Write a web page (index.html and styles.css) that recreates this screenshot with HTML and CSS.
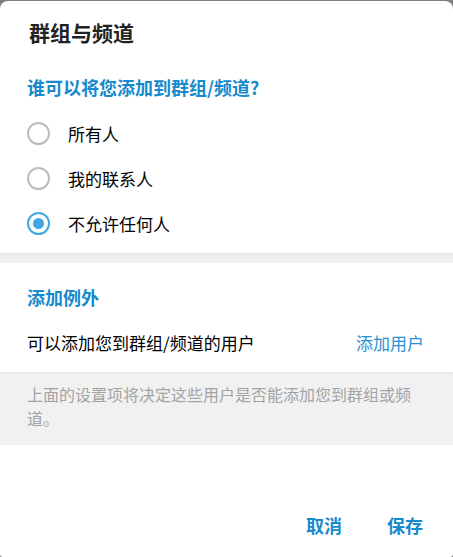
FILE: index.html
```html
<!DOCTYPE html>
<html lang="zh">
<head>
<meta charset="utf-8">
<link rel="stylesheet" href="styles.css">
</head>
<body>
<div class="dialog">
  <div class="title">群组与频道</div>
  <div class="section-head">谁可以将您添加到群组/频道?</div>
  <div class="options">
    <div class="option"><span class="radio"></span><span class="label">所有人</span></div>
    <div class="option"><span class="radio"></span><span class="label">我的联系人</span></div>
    <div class="option"><span class="radio checked"></span><span class="label">不允许任何人</span></div>
  </div>
  <div class="band"></div>
  <div class="section-head second">添加例外</div>
  <div class="row">
    <span class="row-text">可以添加您到群组/频道的用户</span>
    <span class="row-link">添加用户</span>
  </div>
  <div class="note">上面的设置项将决定这些用户是否能添加您到群组或频道。</div>
  <div class="spacer"></div>
  <div class="footer">
    <span class="btn">取消</span>
    <span class="btn">保存</span>
  </div>
</div>
</body>
</html>
```
FILE: styles.css
```css
html, body {
  margin: 0;
  padding: 0;
}
body {
  background: #7f7f7f;
  width: 453px;
  height: 557px;
  overflow: hidden;
  font-family: "Noto Sans CJK SC", "Noto Sans", sans-serif;
}
.dialog {
  margin-top: 1px;
  height: 556px;
  background: #fff;
  border-radius: 8px 8px 3px 3px;
  display: flex;
  flex-direction: column;
  overflow: hidden;
}
.title {
  height: 62px;
  display: flex;
  align-items: center;
  padding-left: 29px;
  font-size: 21px;
  font-weight: bold;
  color: #222;
}
.section-head {
  height: 48px;
  display: flex;
  align-items: center;
  padding-left: 27px;
  font-size: 18px;
  font-weight: bold;
  color: #168acd;
}
.section-head.second {
  margin-top: 12px;
  height: 44px;
}
.options {
  padding-bottom: 7px;
}
.option {
  height: 45px;
  display: flex;
  align-items: center;
  padding-left: 27px;
}
.radio {
  width: 23px;
  height: 23px;
  box-sizing: border-box;
  border: 2px solid #bcbcbc;
  border-radius: 50%;
  display: flex;
  align-items: center;
  justify-content: center;
}
.radio.checked {
  border-color: #40a7e3;
}
.radio.checked::after {
  content: "";
  width: 11px;
  height: 11px;
  border-radius: 50%;
  background: #40a7e3;
}
.label {
  margin-left: 18px;
  font-size: 17px;
  color: #000;
}
.band {
  height: 10px;
  background: linear-gradient(#e6e6e6, #f1f1f1 4px);
}
.row {
  height: 46px;
  display: flex;
  align-items: center;
  justify-content: space-between;
  padding: 0 29px 0 27px;
  margin-bottom: 7px;
  font-size: 17px;
}
.row-text {
  color: #000;
}
.row-link {
  color: #2a8fd3;
}
.note {
  background: linear-gradient(#e8e8e8, #f1f1f1 4px);
  padding: 10px 27px 15px 27px;
  font-size: 16px;
  line-height: 24px;
  color: #a3a3a3;
}
.spacer {
  flex: 1;
}
.footer {
  height: 64px;
  display: flex;
  align-items: center;
  justify-content: flex-end;
  gap: 45px;
  padding-right: 30px;
}
.btn {
  font-size: 18px;
  font-weight: bold;
  color: #168acd;
}
```
